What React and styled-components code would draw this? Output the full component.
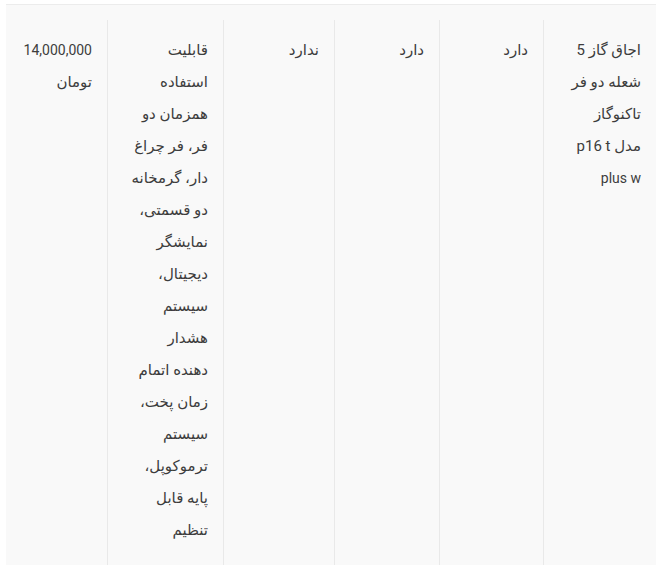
import React from "react"
import styled, { createGlobalStyle } from "styled-components"

const GlobalStyle = createGlobalStyle`
    body {
        margin: 0;
        background: #ffffff;
        font-family: Roboto, "DejaVu Sans", sans-serif;
    }
`

// each cell keeps the line breaks seen in the product compare table
const columns = [
    { width: 113, lines: ["اجاق گاز 5", "شعله دو فر", "تاکنوگاز", "مدل p16 t", "plus w"] },
    { width: 104, lines: ["دارد"] },
    { width: 105, lines: ["دارد"] },
    { width: 111, lines: ["ندارد"] },
    {
        width: 116,
        lines: [
            "قابلیت", "استفاده", "همزمان دو", "فر، فر چراغ", "دار، گرمخانه",
            "دو قسمتی،", "نمایشگر", "دیجیتال،", "سیستم", "هشدار",
            "دهنده اتمام", "زمان پخت،", "سیستم", "ترموکوپل،", "پایه قابل", "تنظیم",
        ],
    },
    { width: 101, lines: ["14,000,000", "تومان"] },
]

const isLatin = (s) => /^[\x20-\x7e]+$/.test(s)

const App = () => {
    return (
        <Page>
            <GlobalStyle />
            <TableBox>
                <Row dir="rtl" $cols={columns.map(c => c.width + "px").join(" ")}>
                    {columns.map((col, i) => (
                        <Cell key={i} $last={i === columns.length - 1}>
                            {col.lines.map((line, j) => (
                                <Line key={j} $latin={isLatin(line)}>{line}</Line>
                            ))}
                        </Cell>
                    ))}
                </Row>
            </TableBox>
        </Page>
    )
}

export default App

const Page = styled.div`
    padding: 4px 0 2px 6px;
`

const TableBox = styled.div`
    background: #f9f9f9;
    border-top: 1px solid #ececec;
    padding-top: 15px;
`

const Row = styled.div`
    display: grid;
    grid-template-columns: ${p => p.$cols};
`

const Cell = styled.div`
    box-sizing: border-box;
    padding: 14px 15px 19px 15px;
    border-left: ${p => (p.$last ? "none" : "1px solid #e9e9e9")};
    color: #3d3d3d;
    text-align: right;
`

const Line = styled.div`
    font-size: ${p => (p.$latin ? "14px" : "15px")};
    line-height: 32px;
    white-space: nowrap;
`
